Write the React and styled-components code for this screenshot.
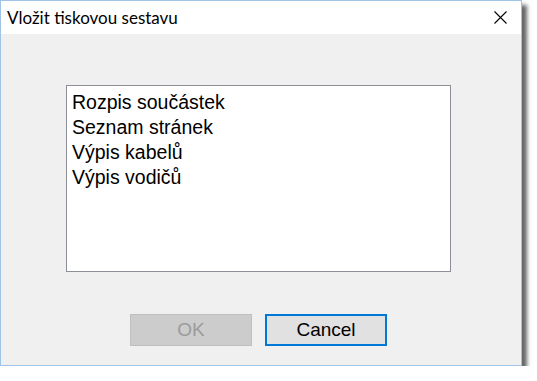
import React from "react";
import styled, { createGlobalStyle } from "styled-components";

const GlobalStyle = createGlobalStyle`
  html, body {
    margin: 0;
    padding: 0;
    background: #ffffff;
  }
  * {
    box-sizing: border-box;
  }
`;

const Window = styled.div`
  display: flex;
  flex-direction: column;
  width: 522px;
  height: 366px;
  background-color: #f0f0f0;
  border: 1px solid #9fc4e6;
  box-shadow: 5px 5px 4px rgba(0, 0, 0, 0.6);
`;

const TitleBar = styled.div`
  display: flex;
  justify-content: space-between;
  align-items: center;
  height: 33px;
  background-color: #ffffff;
  padding: 0 14px 0 6px;
`;

const Title = styled.div`
  font-family: Lato, "Open Sans", sans-serif;
  font-size: 17px;
  color: #000;
  padding-bottom: 1px;
`;

const CloseIcon = styled.svg`
  width: 13px;
  height: 13px;
`;

const Content = styled.div`
  flex: 1;
  display: flex;
  flex-direction: column;
  padding: 51px 0 0 65px;
`;

const ListBox = styled.div`
  width: 385px;
  height: 187px;
  background-color: #ffffff;
  border: 1px solid #8c9096;
  padding: 4px 5px;
`;

const ListItem = styled.div`
  font-family: "Liberation Sans", Arial, sans-serif;
  font-size: 19.5px;
  line-height: 25px;
  color: #000;
`;

const ButtonRow = styled.div`
  display: flex;
  gap: 13px;
  margin-top: 42px;
  padding-left: 64px;
`;

const Button = styled.button`
  width: 122px;
  height: 32px;
  font-family: "Liberation Sans", Arial, sans-serif;
  font-size: 19px;
  padding: 0 0 1px;
  color: ${({ disabled }) => (disabled ? "#9b9b9b" : "#000")};
  background-color: ${({ disabled }) => (disabled ? "#cccccc" : "#e1e1e1")};
  border: ${({ $focused }) => ($focused ? "2px solid #0078d7" : "1px solid #bfbfbf")};
`;

const items = ["Rozpis součástek", "Seznam stránek", "Výpis kabelů", "Výpis vodičů"];

export default function App() {
  return (
    <>
      <GlobalStyle />
      <Window>
        <TitleBar>
          <Title>Vložit tiskovou sestavu</Title>
          <CloseIcon viewBox="0 0 13 13">
            <path d="M0.5 0.5 L12.5 12.5 M12.5 0.5 L0.5 12.5" stroke="#000" strokeWidth="1.1" fill="none" />
          </CloseIcon>
        </TitleBar>
        <Content>
          <ListBox>
            {items.map((item) => (
              <ListItem key={item}>{item}</ListItem>
            ))}
          </ListBox>
          <ButtonRow>
            <Button disabled>OK</Button>
            <Button $focused>Cancel</Button>
          </ButtonRow>
        </Content>
      </Window>
    </>
  );
}
